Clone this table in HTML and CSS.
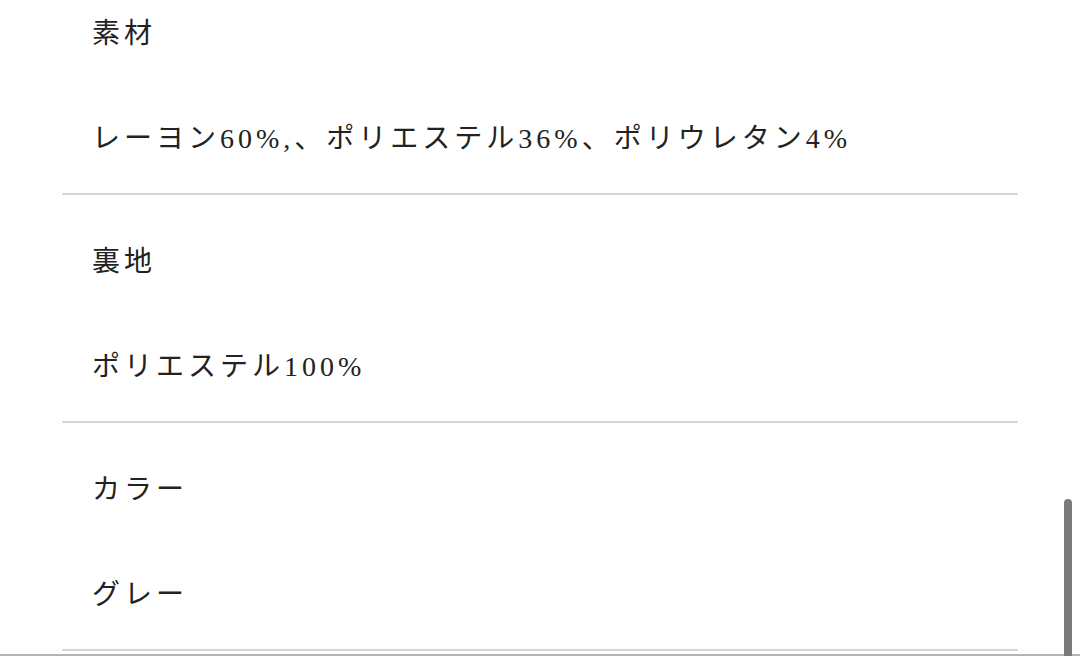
FILE: index.html
```html
<!DOCTYPE html>
<html lang="ja">
<head>
<meta charset="utf-8">
<title>商品詳細</title>
<link rel="stylesheet" href="styles.css">
</head>
<body>
<main class="page">
  <dl class="spec-list">
    <div class="spec spec-first">
      <dt class="spec-label">素材</dt>
      <dd class="spec-value">レーヨン60%,、ポリエステル36%、ポリウレタン4%</dd>
    </div>
    <div class="spec">
      <dt class="spec-label">裏地</dt>
      <dd class="spec-value">ポリエステル100%</dd>
    </div>
    <div class="spec">
      <dt class="spec-label">カラー</dt>
      <dd class="spec-value">グレー</dd>
    </div>
  </dl>
  <div class="bottom-edge"></div>
</main>
<div class="scrollbar"></div>
</body>
</html>
```
FILE: styles.css
```css
html, body {
  margin: 0;
  padding: 0;
  background: #ffffff;
  height: 100%;
  overflow: hidden;
}

body {
  font-family: "Liberation Serif", "Noto Sans CJK JP", serif;
  color: #222222;
}

.page {
  display: flex;
  flex-direction: column;
}

.spec-list {
  margin: 0 62px;
  padding: 0;
  display: flex;
  flex-direction: column;
}

.spec {
  display: flex;
  flex-direction: column;
  gap: 65px;
  padding: 47px 30px 34px;
  border-bottom: 2px solid #d6d6d6;
}

.spec-first {
  padding-top: 14px;
}

.spec-label,
.spec-value {
  margin: 0;
  font-size: 28px;
  line-height: 40px;
  letter-spacing: 4px;
  font-weight: 400;
}

.bottom-edge {
  margin-top: 3px;
  border-top: 2px solid #b4b4b4;
}

.scrollbar {
  position: absolute;
  left: 1064px;
  top: 499px;
  width: 8px;
  height: 170px;
  background: #7b7b7b;
  border-radius: 4px;
}
```
